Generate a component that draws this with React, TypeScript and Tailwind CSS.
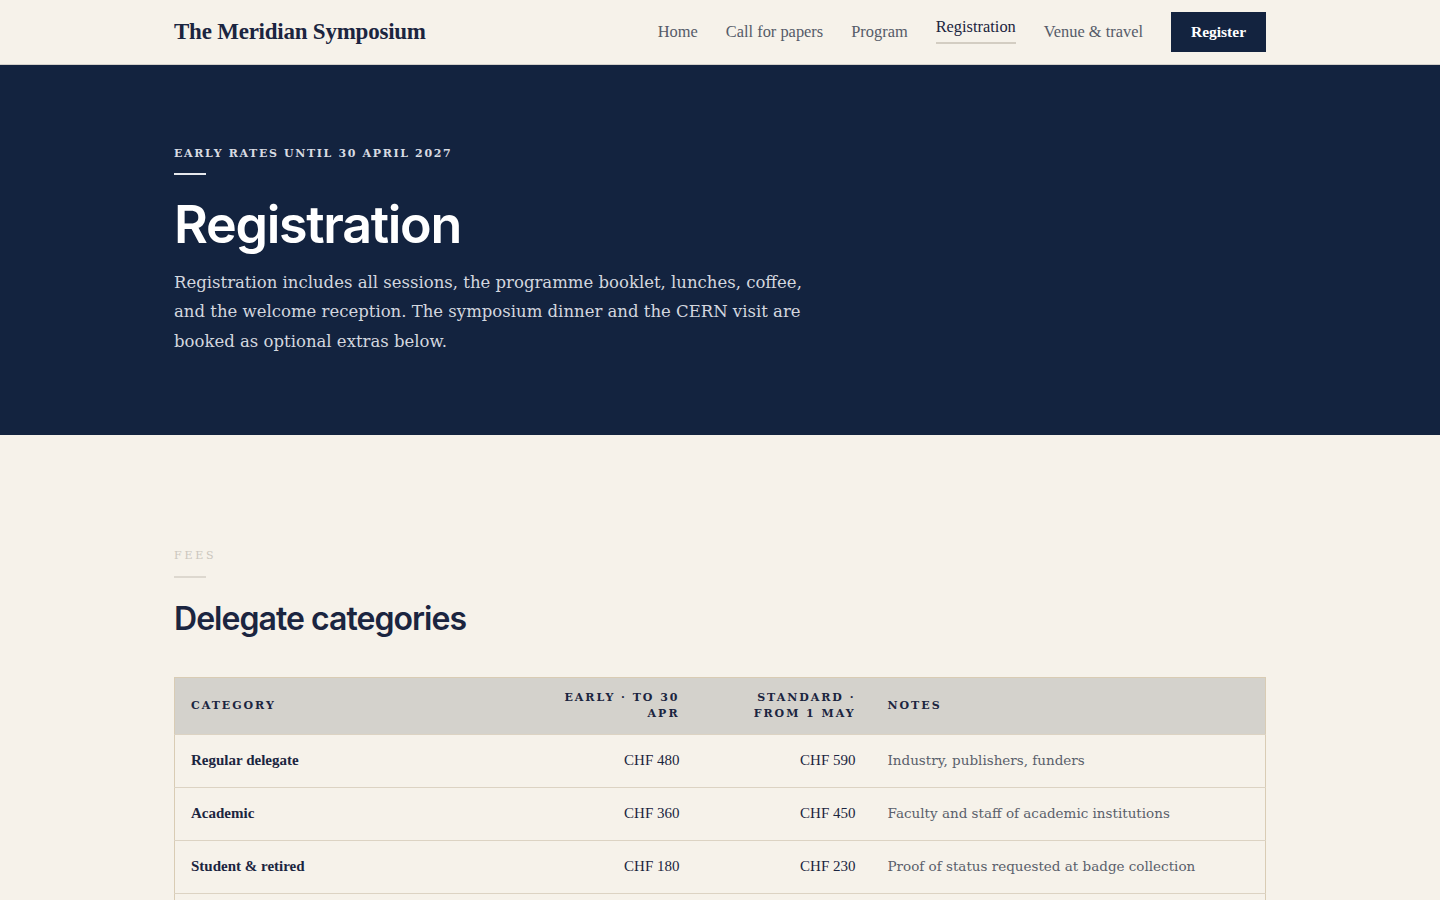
import React from 'react';

const serif = { fontFamily: '"DejaVu Serif", "Liberation Serif", serif' };
const times = { fontFamily: '"Liberation Serif", "DejaVu Serif", serif' };
const sans = { fontFamily: 'Inter, "Noto Sans", sans-serif' };

const navLinks = ['Home', 'Call for papers', 'Program', 'Registration', 'Venue & travel'];

const fees = [
  { category: 'Regular delegate', early: 'CHF 480', standard: 'CHF 590', notes: 'Industry, publishers, funders' },
  { category: 'Academic', early: 'CHF 360', standard: 'CHF 450', notes: 'Faculty and staff of academic institutions' },
  { category: 'Student & retired', early: 'CHF 180', standard: 'CHF 230', notes: 'Proof of status requested at badge collection' },
  { category: 'Accompanying person', early: 'CHF 120', standard: 'CHF 150', notes: 'Reception and lunches only' },
];

const Header: React.FC = () => (
  <header className="h-[65px] border-b border-[#d3d0ca] bg-[#f6f2ea]">
    <div className="mx-auto flex h-full max-w-[1092px] items-center justify-between">
      <div className="text-[23px] font-bold tracking-[-0.01em] text-[#1b2540]" style={times}>
        The Meridian Symposium
      </div>
      <nav className="flex items-center gap-7" style={times}>
        {navLinks.map((link) =>
          link === 'Registration' ? (
            <a key={link} className="-mt-[5px] border-b-2 border-[#d3cdc2] pb-[3px] text-[16.4px] text-[#1b2540]">
              {link}
            </a>
          ) : (
            <a key={link} className="text-[16.4px] text-[#555b68]">
              {link}
            </a>
          )
        )}
        <button className="h-10 w-[95px] bg-[#13233f] text-[15.5px] font-bold text-white">Register</button>
      </nav>
    </div>
  </header>
);

const Hero: React.FC = () => (
  <section className="h-[370px] bg-[#13233f]">
    <div className="mx-auto max-w-[1092px] pt-[81px]">
      <p className="text-[11px] font-bold uppercase tracking-[0.15em] text-[#d8dbe2]" style={serif}>
        Early rates until 30 April 2027
      </p>
      <div className="mt-[10px] h-[2px] w-8 bg-[#e6e8ec]" />
      <h1 className="mt-[20px] text-[52px] font-semibold leading-[60px] tracking-[-0.025em] text-white" style={sans}>
        Registration
      </h1>
      <p className="mt-[13px] w-[660px] text-[16.5px] leading-[29.5px] text-[#d3d7df]" style={serif}>
        Registration includes all sessions, the programme booklet, lunches, coffee, and the welcome reception. The
        symposium dinner and the CERN visit are booked as optional extras below.
      </p>
    </div>
  </section>
);

const FeesTable: React.FC = () => (
  <table className="w-full border-collapse border border-[#d9ccb4] text-left">
    <colgroup>
      <col className="w-[345px]" />
      <col className="w-[176px]" />
      <col className="w-[176px]" />
      <col />
    </colgroup>
    <thead style={serif}>
      <tr className="h-[57px] bg-[#d4d2cc] text-[11px] font-bold uppercase leading-4 tracking-[0.18em] text-[#1b2540]">
        <th className="px-4 font-bold">Category</th>
        <th className="px-4 text-right font-bold">Early · to 30 Apr</th>
        <th className="px-4 text-right font-bold">Standard · from 1 May</th>
        <th className="px-4 font-bold">Notes</th>
      </tr>
    </thead>
    <tbody className="text-[15px]">
      {fees.map((row) => (
        <tr key={row.category} className="h-[53px] border-t border-[#dcd3c3]">
          <td className="px-4 font-bold text-[#1b2540]" style={times}>
            {row.category}
          </td>
          <td className="px-4 text-right text-[#1b2540]" style={times}>
            {row.early}
          </td>
          <td className="px-4 text-right text-[#1b2540]" style={times}>
            {row.standard}
          </td>
          <td className="px-4 text-[13.5px] text-[#5a5f6b]" style={serif}>
            {row.notes}
          </td>
        </tr>
      ))}
    </tbody>
  </table>
);

const App: React.FC = () => (
  <div className="min-h-screen bg-[#f6f2ea]">
    <Header />
    <Hero />
    <section className="mx-auto max-w-[1092px] pt-[113px] pb-24">
      <p className="text-[11px] uppercase tracking-[0.25em] text-[#cbc6bd]" style={serif}>
        Fees
      </p>
      <div className="mt-[11px] h-[2px] w-8 bg-[#ddd8cf]" />
      <h2 className="mt-[21px] text-[32px] font-semibold leading-[40px] tracking-[-0.03em] text-[#1b2540]" style={sans}>
        Delegate categories
      </h2>
      <div className="mt-[38px]">
        <FeesTable />
      </div>
    </section>
  </div>
);

export default App;
